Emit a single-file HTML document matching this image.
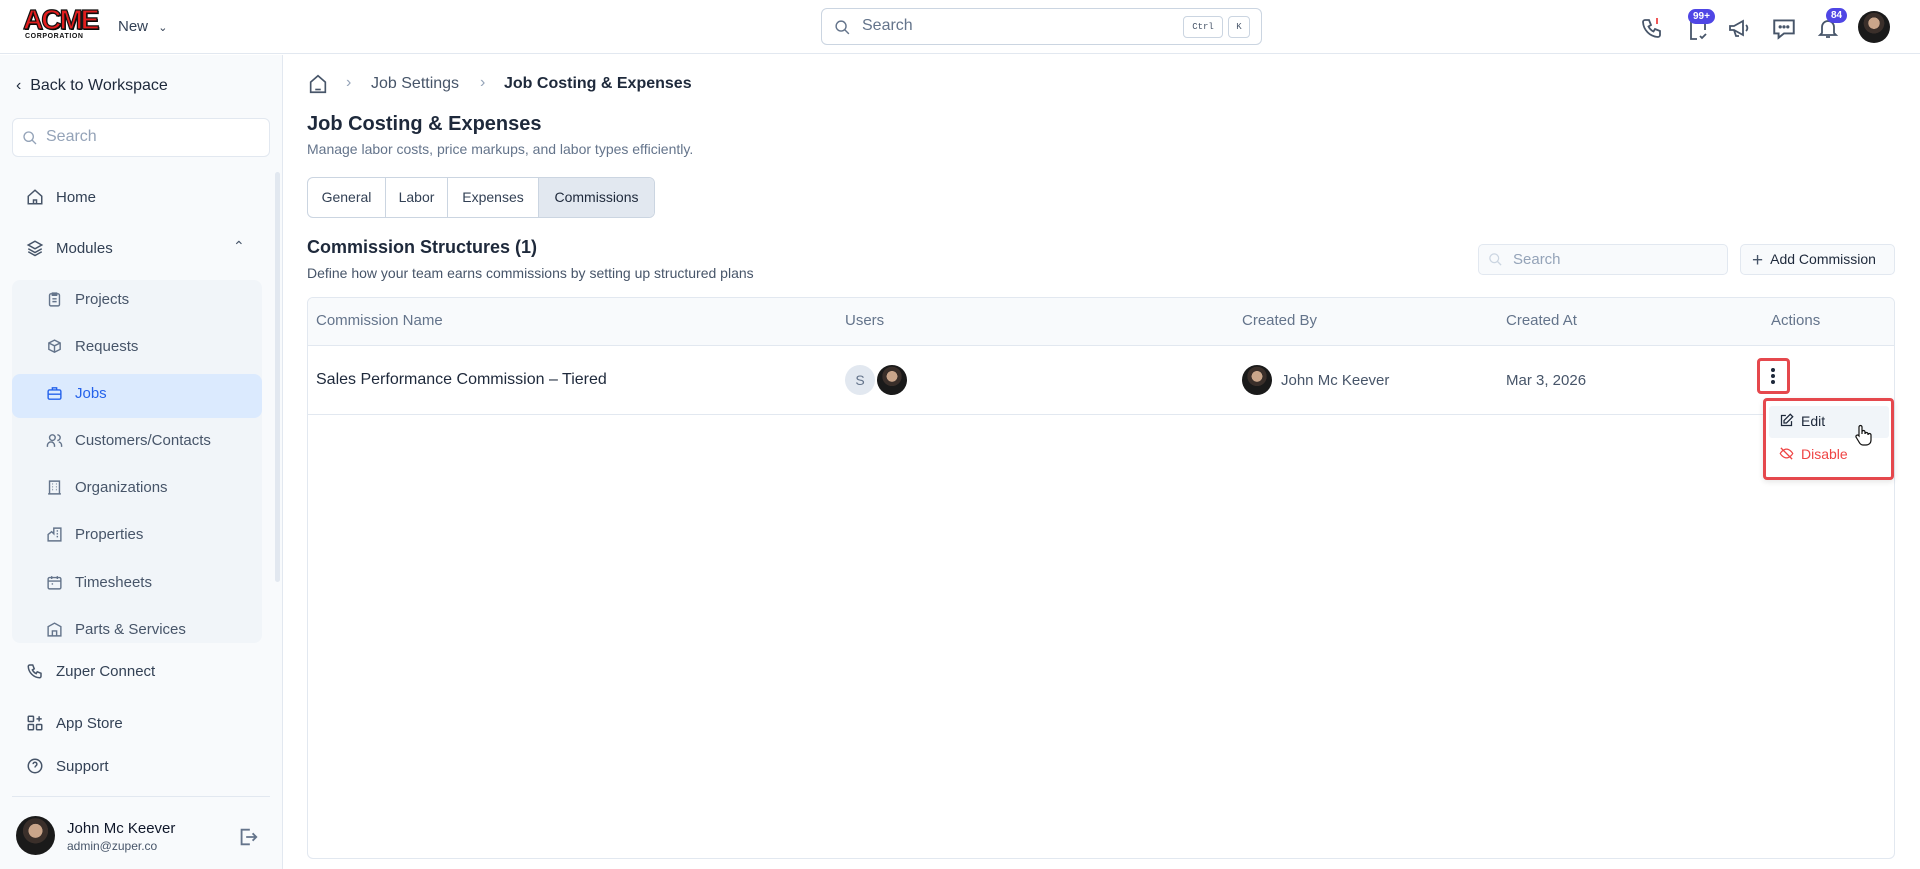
<!DOCTYPE html>
<html><head><meta charset="utf-8"><style>
*{box-sizing:border-box;margin:0;padding:0}
body{width:1920px;height:869px;overflow:hidden;font-family:"Liberation Sans",sans-serif;background:#fff;color:#1e293b;position:relative}
.abs{position:absolute}
svg{display:block}
.hdr{left:0;top:0;width:1920px;height:54px;border-bottom:1px solid #e2e8f0;background:#fff}
.side{left:0;top:55px;width:283px;height:814px;background:#f8fafc;border-right:1px solid #e2e8f0}
.nav{position:absolute;left:26px;display:flex;align-items:center;gap:12px;font-size:15px;color:#334155}
.sub{position:absolute;left:46px;display:flex;align-items:center;gap:12px;font-size:15px;color:#475569}
.th{position:absolute;top:312px;font-size:15px;color:#64748b}
.av{border-radius:50%;background:radial-gradient(circle at 50% 38%,#c9a58a 0 22%,#3a2f2a 23% 40%,#1a1a1a 41%);}
.badge{position:absolute;background:#4f46e5;color:#fff;font-size:10px;font-weight:bold;border-radius:9px;padding:2px 5px}
</style></head><body>
<div class="abs hdr">
  <div class="abs" style="left:23px;top:6px;font-family:'Liberation Sans',sans-serif;font-weight:900;font-size:28px;color:#e11d1d;letter-spacing:-2px;line-height:28px;-webkit-text-stroke:1.2px #111;text-shadow:1px 1px 0 #000">ACME</div>
  <div class="abs" style="left:25px;top:33px;font-size:7px;font-weight:bold;color:#111;letter-spacing:.6px">CORPORATION</div>
  <div class="abs" style="left:118px;top:18px;font-size:15px;color:#334155">New <span style="font-size:11px;margin-left:6px">&#8964;</span></div>
  <div class="abs" style="left:821px;top:8px;width:441px;height:37px;border:1px solid #cbd5e1;border-radius:6px">
    <svg class="abs" style="left:12px;top:10px" width="17" height="17" viewBox="0 0 24 24" fill="none" stroke="#64748b" stroke-width="2"><circle cx="10" cy="10" r="7"/><path d="M15 15l6 6"/></svg>
    <span class="abs" style="left:40px;top:8px;font-size:16px;color:#64748b">Search</span>
    <span class="abs" style="left:361px;top:7px;width:40px;height:22px;border:1px solid #cbd5e1;border-radius:4px;font:9px 'Liberation Mono',monospace;color:#475569;text-align:center;line-height:20px">Ctrl</span>
    <span class="abs" style="left:406px;top:7px;width:22px;height:22px;border:1px solid #cbd5e1;border-radius:4px;font:9px 'Liberation Mono',monospace;color:#475569;text-align:center;line-height:20px">K</span>
  </div>
  <svg class="abs" style="left:1640px;top:16px" width="24" height="24" viewBox="0 0 24 24" fill="none" stroke="#475569" stroke-width="1.8"><path d="M5 4h4l2 5-2.5 1.5a11 11 0 005 5L15 13l5 2v4a2 2 0 01-2 2A16 16 0 013 6a2 2 0 012-2"/><path d="M17 2v6" stroke="#ef4444"/></svg>
  <svg class="abs" style="left:1686px;top:16px" width="24" height="26" viewBox="0 0 24 26" fill="none" stroke="#475569" stroke-width="1.8"><path d="M8 4H5v19h6M16 4h3v10"/><path d="M14 20l2 2 4-4"/></svg>
  <span class="badge" style="left:1688px;top:9px">99+</span>
  <svg class="abs" style="left:1727px;top:16px" width="24" height="24" viewBox="0 0 24 24" fill="none" stroke="#475569" stroke-width="1.8"><path d="M3 10v4h4l9 5V5L7 10H3zM7 14l2 6h3M19 9a4 4 0 010 6"/></svg>
  <svg class="abs" style="left:1771px;top:15px" width="26" height="26" viewBox="0 0 24 24" fill="none" stroke="#475569" stroke-width="1.8"><path d="M3 5h18v12h-9l-5 4v-4H3z"/><circle cx="8.5" cy="11" r=".6" fill="#475569"/><circle cx="12" cy="11" r=".6" fill="#475569"/><circle cx="15.5" cy="11" r=".6" fill="#475569"/></svg>
  <svg class="abs" style="left:1816px;top:16px" width="24" height="24" viewBox="0 0 24 24" fill="none" stroke="#475569" stroke-width="1.8"><path d="M6 17V11a6 6 0 0112 0v6l2 2H4zM10 21h4"/></svg>
  <span class="badge" style="left:1826px;top:8px">84</span>
  <div class="abs av" style="left:1858px;top:11px;width:32px;height:32px"></div>
</div>

<div class="abs side">
  <div class="abs" style="left:16px;top:22px;font-size:16px;color:#1e293b">&#8249;&nbsp; Back to Workspace</div>
  <div class="abs" style="left:12px;top:63px;width:258px;height:39px;background:#fff;border:1px solid #e2e8f0;border-radius:6px">
    <svg class="abs" style="left:9px;top:11px" width="16" height="16" viewBox="0 0 24 24" fill="none" stroke="#94a3b8" stroke-width="2"><circle cx="10" cy="10" r="7"/><path d="M15 15l6 6"/></svg>
    <span class="abs" style="left:33px;top:9px;font-size:16px;color:#94a3b8">Search</span>
  </div>
  <div class="nav" style="top:133px"><svg width="18" height="18" viewBox="0 0 24 24" fill="none" stroke="#475569" stroke-width="2"><path d="M3 11l9-8 9 8v10H3z M10 21v-5h4v5"/></svg>Home</div>
  <div class="nav" style="top:184px"><svg width="18" height="18" viewBox="0 0 24 24" fill="none" stroke="#475569" stroke-width="2"><path d="M12 3l9 5-9 5-9-5z M3 13l9 5 9-5 M3 17l9 5 9-5"/></svg>Modules</div>
  <div class="abs" style="left:233px;top:183px;font-size:14px;color:#475569">&#8963;</div>
  <div class="abs" style="left:12px;top:225px;width:250px;height:363px;background:#f1f5f9;border-radius:8px"></div>
  <div class="abs" style="left:12px;top:319px;width:250px;height:44px;background:#dbeafe;border-radius:8px"></div>
  <div class="abs" style="left:275px;top:117px;width:5px;height:410px;background:#e2e8f0;border-radius:3px"></div>
  <div class="sub" style="top:236px"><svg width="17" height="17" viewBox="0 0 24 24" fill="none" stroke="#64748b" stroke-width="2"><rect x="5" y="4" width="14" height="17" rx="2"/><path d="M9 3h6v3H9zM9 11h6M9 15h6"/></svg>Projects</div>
  <div class="sub" style="top:283px"><svg width="17" height="17" viewBox="0 0 24 24" fill="none" stroke="#64748b" stroke-width="2"><path d="M12 3l8 4v9l-8 4-8-4V7z M4 7l8 4 8-4 M12 11v9"/></svg>Requests</div>
  <div class="sub" style="top:330px;color:#2563eb"><svg width="17" height="17" viewBox="0 0 24 24" fill="none" stroke="#2563eb" stroke-width="2"><rect x="3" y="7" width="18" height="13" rx="2"/><path d="M9 7V4h6v3M3 13h18"/></svg>Jobs</div>
  <div class="sub" style="top:377px"><svg width="17" height="17" viewBox="0 0 24 24" fill="none" stroke="#64748b" stroke-width="2"><circle cx="9" cy="8" r="4"/><path d="M2 21v-2a5 5 0 0110 0v2M16 4a4 4 0 010 8M22 21v-2a5 5 0 00-4-5"/></svg>Customers/Contacts</div>
  <div class="sub" style="top:424px"><svg width="17" height="17" viewBox="0 0 24 24" fill="none" stroke="#64748b" stroke-width="2"><path d="M5 21V3h14v18M3 21h18M9 7h1M14 7h1M9 11h1M14 11h1M9 15h1M14 15h1"/></svg>Organizations</div>
  <div class="sub" style="top:471px"><svg width="17" height="17" viewBox="0 0 24 24" fill="none" stroke="#64748b" stroke-width="2"><path d="M3 21V12l5-4 3 3V3h10v18zM15 7h2M15 11h2M15 15h2"/></svg>Properties</div>
  <div class="sub" style="top:519px"><svg width="17" height="17" viewBox="0 0 24 24" fill="none" stroke="#64748b" stroke-width="2"><rect x="3" y="5" width="18" height="16" rx="2"/><path d="M8 3v4M16 3v4M3 10h18M8 14h2"/></svg>Timesheets</div>
  <div class="sub" style="top:566px"><svg width="17" height="17" viewBox="0 0 24 24" fill="none" stroke="#64748b" stroke-width="2"><path d="M3 21V8l9-5 9 5v13zM9 21v-7h6v7"/></svg>Parts &amp; Services</div>
  <div class="nav" style="top:607px"><svg width="18" height="18" viewBox="0 0 24 24" fill="none" stroke="#475569" stroke-width="2"><path d="M5 4h4l2 5-2.5 1.5a11 11 0 005 5L15 13l5 2v4a2 2 0 01-2 2A16 16 0 013 6a2 2 0 012-2"/></svg>Zuper Connect</div>
  <div class="nav" style="top:659px"><svg width="18" height="18" viewBox="0 0 24 24" fill="none" stroke="#475569" stroke-width="2"><rect x="3" y="3" width="7" height="7" rx="1"/><rect x="3" y="14" width="7" height="7" rx="1"/><rect x="14" y="14" width="7" height="7" rx="1"/><path d="M17.5 3v7M14 6.5h7"/></svg>App Store</div>
  <div class="nav" style="top:702px"><svg width="18" height="18" viewBox="0 0 24 24" fill="none" stroke="#475569" stroke-width="2"><circle cx="12" cy="12" r="9"/><path d="M9.5 9.5a2.5 2.5 0 114 2c-1 .6-1.5 1-1.5 2.5M12 17h.01"/></svg>Support</div>
  <div class="abs" style="left:12px;top:741px;width:258px;height:1px;background:#e2e8f0"></div>
  <div class="abs av" style="left:16px;top:761px;width:39px;height:39px"></div>
  <div class="abs" style="left:67px;top:765px;font-size:15px;color:#0f172a">John Mc Keever</div>
  <div class="abs" style="left:67px;top:784px;font-size:12px;color:#475569">admin@zuper.co</div>
  <svg class="abs" style="left:237px;top:771px" width="22" height="22" viewBox="0 0 24 24" fill="none" stroke="#64748b" stroke-width="2"><path d="M14 4H5v16h9M10 12h11M17 8l4 4-4 4"/></svg>
</div>

<svg class="abs" style="left:307px;top:73px" width="22" height="22" viewBox="0 0 24 24" fill="none" stroke="#475569" stroke-width="1.8"><path d="M4 10l8-7 8 7v11H4z"/><path d="M9 18h6"/></svg>
<div class="abs" style="left:346px;top:74px;font-size:16px;color:#94a3b8">›</div>
<div class="abs" style="left:371px;top:75px;font-size:16px;color:#475569">Job Settings</div>
<div class="abs" style="left:480px;top:74px;font-size:16px;color:#94a3b8">›</div>
<div class="abs" style="left:504px;top:75px;font-size:16px;font-weight:bold;color:#1e293b">Job Costing &amp; Expenses</div>
<div class="abs" style="left:307px;top:113px;font-size:20px;font-weight:bold;color:#1e293b">Job Costing &amp; Expenses</div>
<div class="abs" style="left:307px;top:141px;font-size:14px;color:#64748b">Manage labor costs, price markups, and labor types efficiently.</div>
<div class="abs" style="left:307px;top:177px;width:348px;height:41px;border:1px solid #cbd5e1;border-radius:6px;overflow:hidden;display:flex;font-size:14px;color:#334155">
  <div style="width:78px;border-right:1px solid #cbd5e1;text-align:center;line-height:39px">General</div>
  <div style="width:62px;border-right:1px solid #cbd5e1;text-align:center;line-height:39px">Labor</div>
  <div style="width:91px;border-right:1px solid #cbd5e1;text-align:center;line-height:39px">Expenses</div>
  <div style="flex:1;background:#e2e8f0;text-align:center;line-height:39px;color:#1e293b">Commissions</div>
</div>
<div class="abs" style="left:307px;top:237px;font-size:18px;font-weight:bold;color:#1e293b">Commission Structures (1)</div>
<div class="abs" style="left:307px;top:265px;font-size:14px;color:#475569">Define how your team earns commissions by setting up structured plans</div>
<div class="abs" style="left:1478px;top:244px;width:250px;height:31px;background:#f8fafc;border:1px solid #e2e8f0;border-radius:5px">
  <svg class="abs" style="left:9px;top:7px" width="15" height="15" viewBox="0 0 24 24" fill="none" stroke="#cbd5e1" stroke-width="2"><circle cx="10" cy="10" r="7"/><path d="M15 15l6 6"/></svg>
  <span class="abs" style="left:34px;top:6px;font-size:15px;color:#94a3b8">Search</span>
</div>
<div class="abs" style="left:1740px;top:244px;width:155px;height:31px;background:#f8fafc;border:1px solid #e2e8f0;border-radius:5px;font-size:14px;color:#1e293b;line-height:29px;padding-left:11px"><span style="font-size:19px;vertical-align:-2px;color:#475569">+</span>&nbsp; Add Commission</div>

<div class="abs" style="left:307px;top:297px;width:1588px;height:562px;border:1px solid #e2e8f0;border-radius:6px;overflow:hidden">
  <div class="abs" style="left:0;top:0;width:100%;height:48px;background:#f8fafc;border-bottom:1px solid #e2e8f0"></div>
  <div class="abs" style="left:0;top:116px;width:100%;height:1px;background:#e2e8f0"></div>
</div>
<div class="th" style="left:316px">Commission Name</div>
<div class="th" style="left:845px">Users</div>
<div class="th" style="left:1242px">Created By</div>
<div class="th" style="left:1506px">Created At</div>
<div class="th" style="left:1771px">Actions</div>
<div class="abs" style="left:316px;top:371px;font-size:16px;color:#1e293b">Sales Performance Commission – Tiered</div>
<div class="abs" style="left:845px;top:365px;width:30px;height:30px;border-radius:50%;background:#e2e8f0;color:#64748b;font-size:14px;text-align:center;line-height:30px">S</div>
<div class="abs av" style="left:877px;top:365px;width:30px;height:30px"></div>
<div class="abs av" style="left:1242px;top:365px;width:30px;height:30px"></div>
<div class="abs" style="left:1281px;top:372px;font-size:15px;color:#475569">John Mc Keever</div>
<div class="abs" style="left:1506px;top:372px;font-size:15px;color:#475569">Mar 3, 2026</div>
<div class="abs" style="left:1757px;top:358px;width:33px;height:36px;border:3px solid #e5484d;border-radius:4px;background:#fff">
  <div class="abs" style="left:11px;top:7px;width:4px;height:4px;border-radius:50%;background:#1e293b;box-shadow:0 6px 0 #1e293b,0 12px 0 #1e293b"></div>
</div>
<div class="abs" style="left:1763px;top:398px;width:131px;height:82px;border:3px solid #e5484d;border-radius:4px;background:#fff;box-shadow:0 2px 6px rgba(0,0,0,.1)">
  <div class="abs" style="left:3px;top:5px;width:120px;height:32px;background:#f1f5f9;border-radius:3px"></div>
  <svg class="abs" style="left:13px;top:12px" width="15" height="15" viewBox="0 0 24 24" fill="none" stroke="#1e293b" stroke-width="2"><path d="M11 4H4v16h16v-7M18 2l4 4-10 10H8v-4z"/></svg>
  <span class="abs" style="left:35px;top:12px;font-size:14px;color:#1e293b">Edit</span>
  <svg class="abs" style="left:13px;top:45px" width="15" height="15" viewBox="0 0 24 24" fill="none" stroke="#ef4444" stroke-width="2"><path d="M2 12s4-7 10-7 10 7 10 7-4 7-10 7S2 12 2 12zM3 3l18 18"/></svg>
  <span class="abs" style="left:35px;top:45px;font-size:14px;color:#ef4444">Disable</span>
</div>
<svg class="abs" style="left:1854px;top:424px" width="18" height="22" viewBox="0 0 18 22" fill="#fff" stroke="#111" stroke-width="1.2"><path d="M5 12V3a1.5 1.5 0 013 0v7V8a1.5 1.5 0 013 0v2a1.5 1.5 0 013 0v1a1.5 1.5 0 013 0v5c0 3-2 5-5 5H9c-2 0-3-1-4-3l-3-5a1.5 1.5 0 012.5-1.5z"/></svg>
</body></html>
